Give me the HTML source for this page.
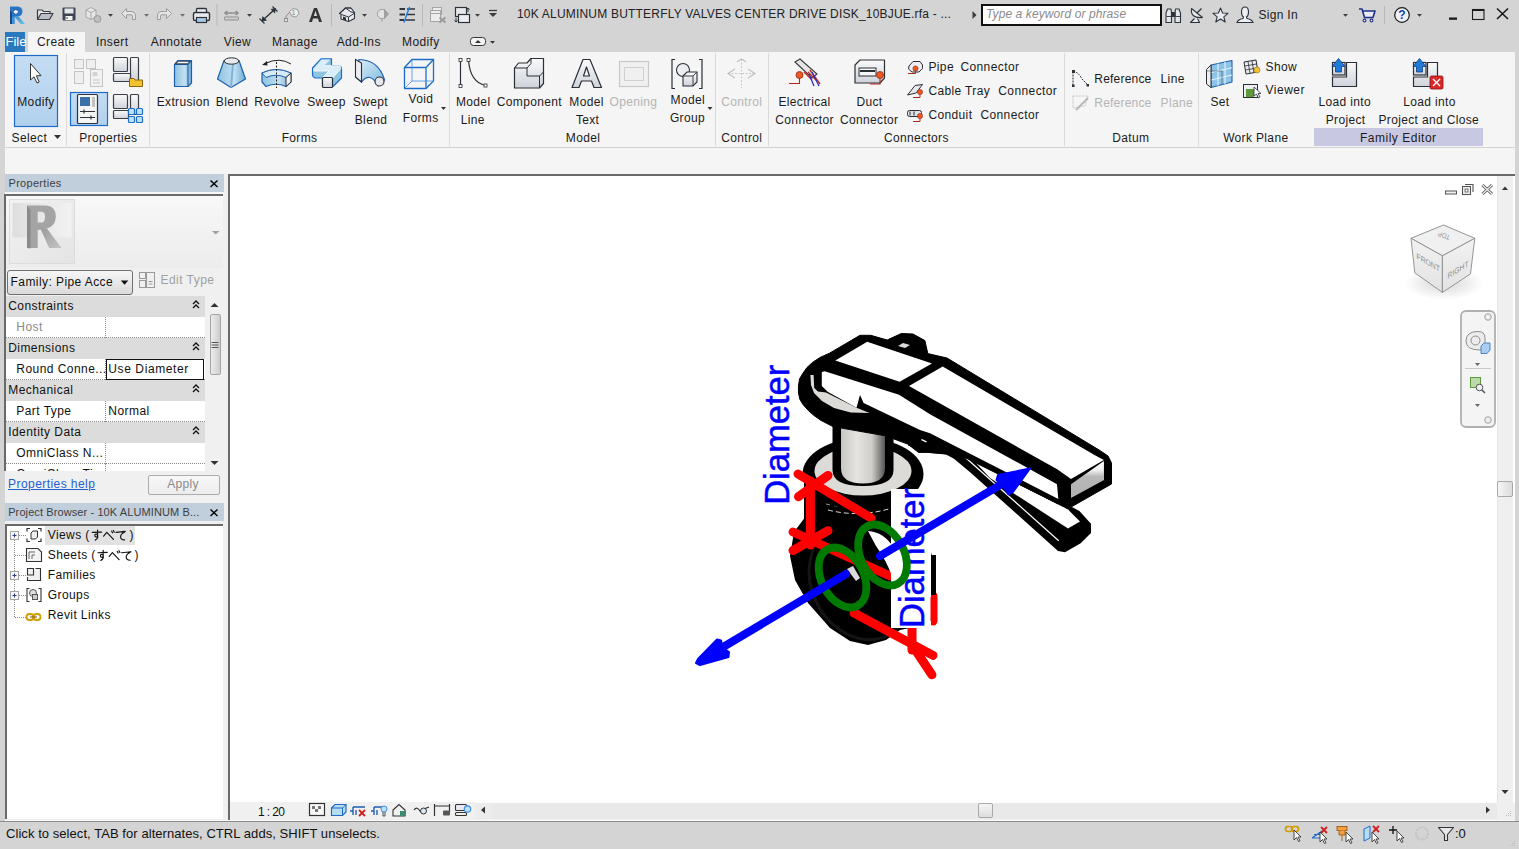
<!DOCTYPE html>
<html><head><meta charset="utf-8">
<style>
*{margin:0;padding:0;box-sizing:border-box}
html,body{width:1519px;height:849px;overflow:hidden;background:#d4d4d4;font-family:"Liberation Sans",sans-serif;color:#000;position:relative}
.a{position:absolute}
.t{position:absolute;white-space:nowrap;color:#1b1b1b}
svg.o{position:absolute;left:0;top:0;overflow:visible}
</style></head><body>

<div class="a" style="left:0px;top:0px;width:1519px;height:31px;background:#d4d4d4"></div>
<svg class="o" width="1519" height="31" viewBox="0 0 1519 31">
<defs>
<linearGradient id="rlogo" x1="0" y1="0" x2="1" y2="1"><stop offset="0" stop-color="#3a7fc8"/><stop offset="1" stop-color="#1e4f8c"/></linearGradient>
</defs>
<!-- R logo -->
<defs><linearGradient id="rleg" x1="0" y1="0" x2="1" y2="1"><stop offset="0" stop-color="#3a8ccf"/><stop offset="1" stop-color="#6cc4ee"/></linearGradient></defs>
<path d="M10 6.5 L17.5 6.5 Q22.5 6.8 22.5 11.5 Q22.3 15.8 18 16.6 L14.5 16.8 L14.5 24 L10 24 Z" fill="#2a74c6"/>
<path d="M10 11 L12 12 L12 24 L10 24 Z" fill="#1c4785"/>
<path d="M12 17 L14.5 16.5 L14.5 24 L12 24 Z" fill="#3f93d4"/>
<path d="M14.5 16.5 L18.5 16.2 L25 24 L20.5 24 Z" fill="url(#rleg)"/>
<circle cx="15.8" cy="11.6" r="2.1" fill="#f2f2f2"/>
<path d="M13.7 10.5 Q15.5 8.6 17.8 10.2" fill="none" stroke="#1c3a70" stroke-width="0.9"/>
<!-- open folder -->
<path d="M37.5 19.5 L37.5 10 L42 10 L43.5 11.5 L50 11.5 L50 13.5" fill="#e8e8ea" stroke="#3a3d44" stroke-width="1.2"/>
<path d="M37.5 19.5 L41 13.5 L53 13.5 L49.5 19.5 Z" fill="#b9bec8" stroke="#3a3d44" stroke-width="1.2" stroke-linejoin="round"/>
<!-- save -->
<rect x="62.5" y="7.5" width="13" height="13" rx="1" fill="#3d4350"/>
<rect x="64.5" y="8.5" width="9" height="5" fill="#e4e6ea"/>
<rect x="65.5" y="16" width="7" height="4" fill="#f4f4f4"/>
<rect x="66.5" y="17" width="1" height="2" fill="#3d4350"/>
<!-- sync (gray) -->
<g fill="#e6e6e6" stroke="#a8a8a8" stroke-width="1"><path d="M86 10 L91 7.5 L96 10 L96 17 L91 19.5 L86 17 Z"/><path d="M86 10 L91 12.5 L96 10 M91 12.5 L91 19.5" fill="none"/></g>
<circle cx="97.5" cy="19" r="3.5" fill="#bdbdbd" stroke="#9a9a9a"/>
<path d="M108 14 L113 14 L110.5 16.8 Z" fill="#3c3c3c"/>
<!-- undo -->
<path d="M121.5 13.5 L126.5 8.5 L126.5 11.5 L131 11.5 Q135.5 11.5 135.5 16 L135.5 19.5 L132.5 19.5 L132.5 16 Q132.5 14.8 131 14.8 L126.5 14.8 L126.5 18.5 Z" fill="#e4e4e4" stroke="#9c9c9c" stroke-width="1"/>
<path d="M144 14 L149 14 L146.5 16.8 Z" fill="#6c6c6c"/>
<!-- redo -->
<path d="M171.5 13.5 L166.5 8.5 L166.5 11.5 L162 11.5 Q157.5 11.5 157.5 16 L157.5 19.5 L160.5 19.5 L160.5 16 Q160.5 14.8 162 14.8 L166.5 14.8 L166.5 18.5 Z" fill="#e4e4e4" stroke="#9c9c9c" stroke-width="1"/>
<path d="M180 14 L185 14 L182.5 16.8 Z" fill="#6c6c6c"/>
<!-- print -->
<rect x="196.5" y="8.5" width="10" height="5" rx="1" fill="#f2f2f2" stroke="#2d333d" stroke-width="1.3"/>
<rect x="193.5" y="12.5" width="16" height="8" rx="1.5" fill="#e9eaee" stroke="#2d333d" stroke-width="1.4"/>
<rect x="196.5" y="17.5" width="10" height="5" fill="#a9c8e4" stroke="#2d333d" stroke-width="1.2"/>
<rect x="216.5" y="4" width="1" height="22" fill="#b8b8b8"/>
<!-- aligned dim -->
<path d="M224.5 13 L238.5 13 M224.5 13 L227.5 11 M224.5 13 L227.5 15 M238.5 13 L235.5 11 M238.5 13 L235.5 15" stroke="#8e8e8e" stroke-width="1.3" fill="none"/>
<rect x="224.5" y="17" width="14" height="3" rx="0.5" fill="#d0d0d0" stroke="#8e8e8e"/>
<path d="M247 14 L252 14 L249.5 16.8 Z" fill="#3c3c3c"/>
<!-- measure -->
<path d="M263.5 19.5 L274 10" stroke="#2d333d" stroke-width="1.5"/>
<path d="M261.5 21.5 L262.5 16 L267 20.5 Z M276 8 L275 13.5 L270.5 9 Z" fill="#2d333d"/>
<path d="M259.5 18.5 L264.5 23.5 M272.5 6.5 L277.5 11.5" stroke="#2d333d" stroke-width="1.2"/>
<!-- tag -->
<path d="M286 20 L286 16 L290 12" stroke="#8e8e8e" stroke-width="1" fill="none"/>
<rect x="284.5" y="18.5" width="3" height="3" fill="#e8e8e8" stroke="#8e8e8e"/>
<path d="M289.5 11.5 L293 8.5 L297.5 9.5 L299 13.5 L296 17 L291.5 16 Z" fill="#ececec" stroke="#9a9a9a"/>
<text x="291.6" y="15.2" font-size="7" fill="#8a8a8a" font-family="Liberation Sans">1</text>
<!-- A -->
<path d="M309 22 L314 8 L317 8 L322 22 L319 22 L318 18.5 L313 18.5 L312 22 Z M313.8 16 L317.2 16 L315.5 10.8 Z" fill="#333" fill-rule="evenodd"/>
<rect x="331" y="4" width="1" height="22" fill="#b8b8b8"/>
<!-- house -->
<path d="M339.5 13.5 L345.5 8 L351 8 L354.5 12.5 L354.5 18.5 L348.5 21.5 L341 19 L341 14 Z" fill="#e8e9ee" stroke="#2d333d" stroke-width="1.1" stroke-linejoin="round"/>
<path d="M339.5 13.5 L345.5 8 L351 12 L354.5 12.5 M345.5 8 L351 8 M341.5 14.5 L348.5 17 L354 13.5 M348.5 17 L348.5 21.5" fill="none" stroke="#2d333d" stroke-width="1"/>
<path d="M343 19.5 L343 16.5 L346 17.5 L346 20.5" fill="#2d333d"/>
<path d="M362 14 L367 14 L364.5 16.8 Z" fill="#3c3c3c"/>
<!-- section / viewpoint -->
<circle cx="382" cy="14" r="4.6" fill="#e2e2e2" stroke="#a0a0a0"/>
<path d="M384 8.5 L389 14 L384 19.5 Z" fill="#a0a0a0"/>
<path d="M382 18.5 L382 22" stroke="#a0a0a0"/>
<!-- thin lines -->
<path d="M399.5 9 L405 9 M399.5 14.5 L405 14.5 M399.5 20 L404 20" stroke="#33363c" stroke-width="2.2"/>
<path d="M407 9 L415 9 M406 14.5 L415 14.5 M405 20 L415 20" stroke="#33363c" stroke-width="1.3"/>
<path d="M409.5 7 L404 22.5" stroke="#1e7ae6" stroke-width="1.4"/>
<rect x="422" y="4" width="1" height="22" fill="#b8b8b8"/>
<!-- close inactive -->
<rect x="432.5" y="7.5" width="9" height="7" fill="#ececec" stroke="#a4a4a4"/>
<rect x="430.5" y="10.5" width="10" height="8" fill="#ececec" stroke="#a4a4a4"/>
<rect x="430.5" y="13.5" width="10" height="8" fill="#ececec" stroke="#a4a4a4"/>
<path d="M439.5 17.5 L445.5 22.5 M445.5 17.5 L439.5 22.5" stroke="#9a9a9a" stroke-width="1.8"/>
<!-- switch windows -->
<rect x="455.5" y="7.5" width="11" height="9" fill="#e8e8ea" stroke="#2d333d" stroke-width="1.2"/>
<rect x="458.5" y="14.5" width="11" height="8" fill="#eeeef0" stroke="#2d333d" stroke-width="1.2"/>
<path d="M468 8 L468 12 M466.5 9.5 L468 8 L469.5 9.5 M456 18 L456 22 M454.5 20.5 L456 22 L457.5 20.5" stroke="#2d333d" stroke-width="1" fill="none"/>
<path d="M475 14 L480 14 L477.5 16.8 Z" fill="#3c3c3c"/>
<path d="M489 10.5 L497 10.5" stroke="#3c3c3c" stroke-width="1.3"/>
<path d="M489 13 L497 13 L493 17 Z" fill="#3c3c3c"/>
<!-- expander triangle near search -->
<path d="M972.5 11 L976.5 15 L972.5 19 Z" fill="#3c3c3c"/>
<!-- binoculars -->
<g fill="#e4e6ea" stroke="#2d333d" stroke-width="1.1" stroke-linejoin="round">
<path d="M1166 22.5 L1166 13 L1167.5 9 L1171 9 L1171.5 13 L1171.5 22.5 Z"/>
<path d="M1175 22.5 L1175 13 L1175.5 9 L1179 9 L1180.5 13 L1180.5 22.5 Z"/>
<rect x="1171.5" y="12.5" width="3.5" height="4" fill="#2d333d"/>
</g>
<path d="M1166.5 16.5 L1171 16.5 M1175.5 16.5 L1180 16.5" stroke="#2d333d" stroke-width="0.9"/>
<!-- satellite -->
<path d="M1194.5 18.5 L1190.5 22.5 L1199.5 22.5 L1197.5 18.5" fill="#e6e8ec" stroke="#2d333d" stroke-width="1.1" stroke-linejoin="round"/>
<path d="M1191.5 8.5 Q1190 18.5 1202.5 17.5 Z" fill="#e6e8ec" stroke="#2d333d" stroke-width="1.1" stroke-linejoin="round"/>
<path d="M1197 13 L1201.5 8.5" stroke="#2d333d" stroke-width="1.3"/>
<!-- star -->
<path d="M1220.5 8 L1222.6 13 L1228 13.3 L1223.8 16.8 L1225.2 22 L1220.5 19 L1215.8 22 L1217.2 16.8 L1213 13.3 L1218.4 13 Z" fill="#e8eaee" stroke="#2d333d" stroke-width="1.1" stroke-linejoin="round"/>
<!-- user -->
<path d="M1241.5 12 Q1241.5 7 1245 7 Q1248.5 7 1248.5 12 Q1248.5 16 1246.5 17 L1247 18.5 Q1252 19.5 1253 22.5 L1237 22.5 Q1238 19.5 1243 18.5 L1243.5 17 Q1241.5 16 1241.5 12 Z" fill="#eceef2" stroke="#2d333d" stroke-width="1.1"/>
<path d="M1343 14 L1348 14 L1345.5 16.8 Z" fill="#3c3c3c"/>
<!-- cart -->
<path d="M1359 9 L1362 9 L1364.5 17.5 L1373 17.5 L1375 11 L1363 11" fill="#e8eaf4" stroke="#1f2f8c" stroke-width="1.6" stroke-linejoin="round"/>
<circle cx="1364.5" cy="20.5" r="1.4" fill="#fff" stroke="#1f2f8c" stroke-width="1.1"/>
<circle cx="1371.5" cy="20.5" r="1.4" fill="#fff" stroke="#1f2f8c" stroke-width="1.1"/>
<rect x="1384" y="6" width="1" height="18" fill="#b8b8b8"/>
<!-- help -->
<circle cx="1402" cy="15" r="7.3" fill="#eef0f6" stroke="#1b1b1b" stroke-width="1.2"/>
<text x="1398.2" y="19.3" font-size="12" font-weight="bold" fill="#1446b4" font-family="Liberation Sans">?</text>
<path d="M1417 14 L1422 14 L1419.5 16.8 Z" fill="#3c3c3c"/>
<!-- window buttons -->
<rect x="1449" y="17.5" width="8" height="2.3" fill="#1b1b1b"/>
<rect x="1472.5" y="9.5" width="11.5" height="10" fill="none" stroke="#1b1b1b" stroke-width="1.1"/>
<rect x="1472.5" y="9" width="11.5" height="2" fill="#1b1b1b"/>
<path d="M1497 8.5 L1508 19 M1508 8.5 L1497 19" stroke="#1b1b1b" stroke-width="1.6"/>
</svg>
<div class="t" style="left:517px;top:7.64px;font-size:12px;line-height:12px;letter-spacing:0.2px;color:#222;">10K ALUMINUM BUTTERFLY VALVES CENTER DRIVE DISK_10BJUE.rfa - ...</div>
<div class="a" style="left:981px;top:4px;width:181px;height:22px;background:#fff;border:2px solid #111"></div>
<div class="t" style="left:986px;top:8.44px;font-size:12px;line-height:12px;letter-spacing:0.1px;color:#8a8a8a;font-style:italic">Type a keyword or phrase</div>
<div class="t" style="left:1258.5px;top:8.54px;font-size:12px;line-height:12px;letter-spacing:0.3px;color:#222;">Sign In</div>
<div class="a" style="left:5px;top:32px;width:20px;height:20px;background:#2a79be"></div>
<div class="t" style="left:5.5px;top:35.00px;font-size:13px;line-height:13px;letter-spacing:0px;color:#fff;">File</div>
<div class="a" style="left:28px;top:32px;width:57px;height:21px;background:#f5f5f5"></div>
<div class="t" style="left:37px;top:35.84px;font-size:12px;line-height:12px;letter-spacing:0.4px;color:#1b1b1b;">Create</div>
<div class="t" style="left:96px;top:35.84px;font-size:12px;line-height:12px;letter-spacing:0.4px;color:#1b1b1b;">Insert</div>
<div class="t" style="left:150.8px;top:35.84px;font-size:12px;line-height:12px;letter-spacing:0.4px;color:#1b1b1b;">Annotate</div>
<div class="t" style="left:223.8px;top:35.84px;font-size:12px;line-height:12px;letter-spacing:0.4px;color:#1b1b1b;">View</div>
<div class="t" style="left:272px;top:35.84px;font-size:12px;line-height:12px;letter-spacing:0.4px;color:#1b1b1b;">Manage</div>
<div class="t" style="left:336.7px;top:35.84px;font-size:12px;line-height:12px;letter-spacing:0.4px;color:#1b1b1b;">Add-Ins</div>
<div class="t" style="left:402px;top:35.84px;font-size:12px;line-height:12px;letter-spacing:0.4px;color:#1b1b1b;">Modify</div>
<svg class="o" width="1519" height="60"><rect x="470.5" y="37.5" width="15" height="8" rx="3" fill="#f4f4f4" stroke="#333" stroke-width="1"/><path d="M475 43 L478 40 L481 43 Z" fill="#333"/><path d="M490 41 L495 41 L492.5 43.8 Z" fill="#333"/></svg>
<div class="a" style="left:5px;top:52px;width:1510px;height:95px;background:#f5f5f5"></div>
<div class="a" style="left:5px;top:147px;width:1510px;height:1px;background:#d2d2d2"></div>
<div class="a" style="left:5px;top:148px;width:1510px;height:26px;background:#f5f5f5"></div>
<div class="a" style="left:1515px;top:52px;width:4px;height:770px;background:#d4d4d4"></div>
<div class="a" style="left:66px;top:53px;width:1px;height:93px;background:#dadada"></div>
<div class="a" style="left:149px;top:53px;width:1px;height:93px;background:#dadada"></div>
<div class="a" style="left:449px;top:53px;width:1px;height:93px;background:#dadada"></div>
<div class="a" style="left:715px;top:53px;width:1px;height:93px;background:#dadada"></div>
<div class="a" style="left:768px;top:53px;width:1px;height:93px;background:#dadada"></div>
<div class="a" style="left:1064px;top:53px;width:1px;height:93px;background:#dadada"></div>
<div class="a" style="left:1198px;top:53px;width:1px;height:93px;background:#dadada"></div>
<div class="a" style="left:1314px;top:128px;width:169px;height:18px;background:#c8c8e2"></div>
<svg class="o" width="1519" height="160">
<defs>
<linearGradient id="gsel" x1="0" y1="0" x2="0" y2="1"><stop offset="0" stop-color="#c5ddf3"/><stop offset="1" stop-color="#b1d1ee"/></linearGradient>
<linearGradient id="gblue" x1="0" y1="0" x2="1" y2="0"><stop offset="0" stop-color="#8ec2e2"/><stop offset="0.6" stop-color="#c3e0f1"/><stop offset="1" stop-color="#6aaad6"/></linearGradient>
<linearGradient id="gblue2" x1="0" y1="0" x2="1" y2="1"><stop offset="0" stop-color="#e0f0fa"/><stop offset="1" stop-color="#7ab7dd"/></linearGradient>
<linearGradient id="gpanel" x1="0" y1="0" x2="0" y2="1"><stop offset="0" stop-color="#fafafa"/><stop offset="1" stop-color="#cfd3da"/></linearGradient>
</defs>
<!-- Modify -->
<rect x="14.5" y="55.5" width="43" height="71" fill="url(#gsel)" stroke="#1e6cc9" stroke-width="1.2"/>
<path d="M30.5 63.5 L30.5 80 L34 76.8 L37 83 L39.2 82 L36.4 75.8 L41 75.6 Z" fill="#fff" stroke="#333" stroke-width="1" stroke-linejoin="round"/>
<path d="M54 135 L61 135 L57.5 139 Z" fill="#333"/>
<!-- Properties: type properties (gray) -->
<g fill="#efefef" stroke="#c4c4c4" stroke-width="1">
<rect x="74.5" y="59.5" width="9" height="9"/><rect x="86.5" y="59.5" width="9" height="9"/>
<rect x="74.5" y="71.5" width="9" height="12"/>
<rect x="90.5" y="69.5" width="12" height="17" fill="#f2f2f2"/>
</g>
<rect x="92.5" y="72" width="5" height="4" fill="#d4d4d4"/>
<path d="M93 80 L100 80 M93 83 L100 83" stroke="#c8c8c8"/>
<!-- family types -->
<g fill="url(#gpanel)" stroke="#3a3e46" stroke-width="1.2">
<rect x="113.5" y="57.5" width="14" height="14" rx="1"/>
<rect x="130.5" y="57.5" width="8" height="23" rx="1"/>
<rect x="113.5" y="73.5" width="17" height="8" rx="1"/>
</g>
<path d="M129.5 78.5 L134 78.5 L135 80 L142.5 80 L142.5 86.5 L129.5 86.5 Z" fill="#f2c230" stroke="#8a6a10" stroke-width="1"/>
<!-- family category selected -->
<rect x="70.5" y="92.5" width="37" height="33" fill="url(#gsel)" stroke="#1e6cc9" stroke-width="1.2"/>
<rect x="77.5" y="94.5" width="20" height="29" rx="1" fill="#f4f4f4" stroke="#2d333d" stroke-width="1.2"/>
<rect x="80" y="97" width="10" height="9" fill="#3b6fa8"/>
<rect x="92" y="97" width="3" height="10" fill="#c2c2c2"/>
<path d="M80 111.5 L95 111.5 M80 117.5 L95 117.5 M84 109.5 L84 113.5 M91 115.5 L91 119.5" stroke="#2d333d" stroke-width="1.2"/>
<!-- family category params -->
<g fill="url(#gpanel)" stroke="#3a3e46" stroke-width="1.2">
<rect x="113.5" y="94.5" width="14" height="14" rx="1"/>
<rect x="130.5" y="94.5" width="8" height="20" rx="1"/>
<rect x="113.5" y="110.5" width="15" height="8" rx="1"/>
</g>
<g fill="#bfe0f4" stroke="#1f6fc6" stroke-width="1.2"><rect x="128.5" y="108.5" width="6" height="6" rx="1"/><rect x="136.5" y="108.5" width="6" height="6" rx="1"/><rect x="128.5" y="116.5" width="6" height="6" rx="1"/><rect x="136.5" y="116.5" width="6" height="6" rx="1"/></g>
<!-- Extrusion -->
<path d="M174.5 64.5 L178 60.5 L191.5 60.5 L191.5 83 L188 86.5 L174.5 86.5 Z" fill="url(#gblue)" stroke="#1f5fae" stroke-width="1.2" stroke-linejoin="round"/>
<path d="M174.5 64.5 L188 64.5 L191.5 60.5 M188 64.5 L188 86.5" fill="none" stroke="#1f5fae" stroke-width="1.1"/>
<path d="M175.5 63.8 L178.5 61.2 L190 61.2 L187.5 63.8 Z" fill="#eef3f8" stroke="#2b2f36" stroke-width="0.9"/>
<!-- Blend -->
<path d="M224 60.5 L217.5 79 L231 87.5 L245.5 79 L239 60.5 Z" fill="url(#gblue)" stroke="#1f5fae" stroke-width="1.2" stroke-linejoin="round"/>
<path d="M231 87.5 L233 63.5" stroke="#7fb4da" stroke-width="2"/>
<ellipse cx="231.5" cy="61" rx="7.3" ry="3.2" fill="#e8eaee" stroke="#2b2f36" stroke-width="1"/>
<!-- Revolve -->
<path d="M262 73 Q276 66 291 73 L291 82 L286 86.5 Q276 82 266 86.5 L262 82 Z" fill="url(#gblue)" stroke="#1f5fae" stroke-width="1.2"/>
<path d="M262 73 Q276 66 291 73 L286 77.5 Q276 73 266 77.5 Z" fill="#d8ecf8" stroke="#1f5fae" stroke-width="1"/>
<path d="M286 77.5 L291 73 L291 82 L286 86.5 Z" fill="#f2f2f2" stroke="#2b2f36" stroke-width="1"/>
<path d="M276.5 62 L276.5 88" stroke="#222" stroke-width="1" stroke-dasharray="2,1.5"/>
<path d="M291 64 Q280 57 266 63" fill="none" stroke="#222" stroke-width="1"/>
<path d="M262 65 L267 61 L267.5 65.5 Z" fill="#222"/>
<!-- Sweep -->
<path d="M312.5 68 L321 58.8 L331.5 58.8 L331.5 65.5 L339 65.5 Q341.5 66.5 341.5 69 L341.5 78 L333 86.5 L322.5 86.5 L322.5 78 L315 78 Q312.5 77 312.5 75 Z" fill="#8cc4e2" stroke="#1f6cc9" stroke-width="1.2" stroke-linejoin="round"/>
<path d="M313 69 L321.5 59.5 L330.5 59.5 L324 65.8 L340.5 65.8 L341 68 L333 77.5 L322.5 77.5 L329 71 L313.5 71 Z" fill="#d9eef8"/>
<path d="M313.5 71 L329 71 M324 65.8 L340.5 65.8 M333 77.5 L341 68.5 M322.5 77.5 L329 71" stroke="#fff" stroke-width="0.9" fill="none"/>
<rect x="322.5" y="77.5" width="10" height="10" rx="1" fill="url(#gpanel)" stroke="#2b2f36" stroke-width="1.2"/>
<!-- Swept blend -->
<path d="M359 59.5 Q379 60 384.5 80 L378 86 Q370 71 361.5 82 L355.5 77 Z" fill="url(#gblue2)" stroke="#1f5fae" stroke-width="1.2"/>
<path d="M355.5 59.5 L361.5 63 L361.5 82 L355.5 77 Z" fill="#eceef2" stroke="#2b2f36" stroke-width="1.1"/>
<circle cx="379.5" cy="81.5" r="4.5" fill="#e6e8ec" stroke="#2b2f36" stroke-width="1.1"/>
<!-- Void forms -->
<g fill="none" stroke="#1e6cc9" stroke-width="1.3"><path d="M404.5 67.5 L412 59.5 L433.5 59.5 L433.5 81 L426 88.5 L404.5 88.5 Z"/><path d="M404.5 67.5 L426 67.5 L433.5 59.5 M426 67.5 L426 88.5"/></g>
<g fill="none" stroke="#3c8ee8" stroke-width="0.8"><path d="M412 59.5 L412 81 L433.5 81 M412 81 L404.5 88.5"/></g>
<path d="M441 107 L446 107 L443.5 110 Z" fill="#333"/>
<!-- Model line -->
<path d="M460.5 60 L460.5 86 M468.5 60 Q470 82 485.5 85.5" fill="none" stroke="#2b2f36" stroke-width="1.2"/>
<rect x="459" y="58.5" width="3" height="3" fill="#fff" stroke="#2b2f36" stroke-width="0.8"/>
<rect x="459" y="84.5" width="3" height="3" fill="#fff" stroke="#2b2f36" stroke-width="0.8"/>
<rect x="467" y="58.5" width="3" height="3" fill="#fff" stroke="#2b2f36" stroke-width="0.8"/>
<rect x="484" y="84" width="3" height="3" fill="#fff" stroke="#2b2f36" stroke-width="0.8"/>
<!-- Component -->
<path d="M514.5 68 L518.5 63 L527 63 L531 58.5 L543.5 58.5 L543.5 83.5 L539.5 88 L514.5 88 Z" fill="url(#gpanel)" stroke="#2b2f36" stroke-width="1.2" stroke-linejoin="round"/>
<path d="M514.5 68 L527 68 L531 63.5 L531 58.5 M527 68 L527 76 L539.5 76 L539.5 88 M539.5 76 L543.5 72" fill="none" stroke="#2b2f36" stroke-width="1"/>
<!-- Model text A -->
<path d="M572 87.5 L583 59.5 L590 59.5 L601.5 87.5 L594 87.5 L591.5 81 L581.5 81 L579 87.5 Z M583.5 76 L589.5 76 L586.5 67 Z" fill="url(#gpanel)" stroke="#2b2f36" stroke-width="1.2" fill-rule="evenodd" stroke-linejoin="round"/>
<!-- Opening (gray) -->
<rect x="619.5" y="61.5" width="29" height="25" fill="#f0f0f0" stroke="#c8c8c8" stroke-width="1.2"/>
<rect x="624.5" y="67.5" width="19" height="13" fill="none" stroke="#d0d0d0" stroke-width="1"/>
<!-- Model group -->
<path d="M675 59.5 L672 59.5 L672 88.5 L675 88.5 M699 59.5 L702 59.5 L702 88.5 L699 88.5" fill="none" stroke="#2b2f36" stroke-width="1.2"/>
<circle cx="683" cy="70" r="6.5" fill="#eceef2" stroke="#2b2f36" stroke-width="1.1"/>
<path d="M683 76 L687 72 L697 72 L697 82 L693 86 L683 86 Z" fill="url(#gpanel)" stroke="#2b2f36" stroke-width="1.1"/>
<path d="M683 76 L693 76 L697 72 M693 76 L693 86" fill="none" stroke="#2b2f36" stroke-width="0.9"/>
<path d="M707.5 107 L712.5 107 L710 110 Z" fill="#333"/>
<!-- Control (gray) -->
<path d="M741.5 59 L741.5 88 M728 73.5 L755 73.5" stroke="#c8c8c8" stroke-width="1" stroke-dasharray="2,1.5"/>
<path d="M735 69 L728 73.5 L735 78 M748 69 L755 73.5 L748 78 M737 62 L741.5 59 L746 62" fill="none" stroke="#c0c0c0" stroke-width="1.2"/>
<!-- Electrical connector -->
<path d="M795 62 L800 59 L817 74 L812 78 Z" fill="#e6e6e6" stroke="#3a3a3a" stroke-width="1.1"/>
<path d="M804 72 L812 80 M808 72 L817 81 M810 70 L820 84" stroke="#c8281e" stroke-width="1.3"/>
<path d="M809 74 L814 86 M812 72 L819 86" stroke="#2930c8" stroke-width="1.3"/>
<circle cx="799.5" cy="75" r="3.5" fill="#e95a24" stroke="#9a2b10" stroke-width="0.8"/>
<path d="M799.5 78 L799.5 83.5 L789 83.5" fill="none" stroke="#b02818" stroke-width="1.1"/>
<!-- Duct connector -->
<path d="M855 65 L860 60 L884.5 60 L884.5 78 L880 83 L855 83 Z" fill="url(#gpanel)" stroke="#2b2f36" stroke-width="1.2" stroke-linejoin="round"/>
<rect x="859" y="68" width="17" height="8" fill="#f6f6f6" stroke="#2b2f36" stroke-width="1"/>
<rect x="860" y="70" width="15" height="2" fill="#2b2f36"/>
<circle cx="880" cy="75" r="3.5" fill="#e95a24" stroke="#9a2b10" stroke-width="0.8"/>
<path d="M880 78 L880 84 L870 84" fill="none" stroke="#b02818" stroke-width="1.1"/>
<!-- small connectors -->
<g>
<path d="M909 66 L913 61.5 L920 61.5 L922.5 65 L922.5 68.5 L919 72 L912 72 L908.5 69 Z" fill="#eceef2" stroke="#2b2f36" stroke-width="1"/>
<circle cx="915.5" cy="68.5" r="2.6" fill="#e95a24" stroke="#9a2b10" stroke-width="0.6"/>
<path d="M915.5 71 L915.5 73.5 L908 73.5" fill="none" stroke="#b02818"/>
<path d="M907.5 95 L915 85.5 L922.5 84.5 L916 93 Z" fill="#e6e8ec" stroke="#2b2f36" stroke-width="1"/>
<circle cx="920" cy="92" r="2.6" fill="#e95a24" stroke="#9a2b10" stroke-width="0.6"/>
<path d="M920 94.5 L920 97.5 L913 97.5" fill="none" stroke="#b02818"/>
<rect x="907.5" y="110.5" width="14" height="6" rx="2" fill="#dfe2e6" stroke="#2b2f36" stroke-width="1"/>
<path d="M910 111.5 L910 115.5 M914 111.5 L914 115.5" stroke="#2b2f36"/>
<circle cx="920" cy="116" r="2.6" fill="#e95a24" stroke="#9a2b10" stroke-width="0.6"/>
<path d="M920 118.5 L920 121.5 L913 121.5" fill="none" stroke="#b02818"/>
</g>
<!-- Reference line -->
<path d="M1073 71.5 L1073 86 M1073 71.5 Q1078 71.5 1082 79 L1088 85" fill="none" stroke="#2b2f36" stroke-width="1" stroke-dasharray="2,1"/>
<rect x="1072" y="70" width="3" height="3" fill="#2b2f36"/><rect x="1072" y="84.5" width="2.5" height="2.5" fill="#2b2f36"/><rect x="1086.5" y="84" width="2.5" height="2.5" fill="#2b2f36"/>
<!-- Reference plane (gray) -->
<path d="M1073 96 L1088 96 L1085 106 L1073 108 Z" fill="none" stroke="#c6c6c6" stroke-width="1" stroke-dasharray="2,1"/>
<path d="M1076 110 L1088 98" stroke="#b8b8b8" stroke-width="2"/>
<!-- Set -->
<path d="M1211 65 L1232 60.5 L1232 82 L1211 87.5 Z" fill="#8cc4e8" stroke="#1f5fae" stroke-width="1.1" stroke-linejoin="round"/>
<path d="M1218 63.5 L1218 85.8 M1225 62 L1225 84 M1211 72.5 L1232 67.8 M1211 80 L1232 75" stroke="#e4f2fb" stroke-width="1.1"/>
<path d="M1206.5 69.5 L1211 65 L1211 87.5 L1206.5 84 Z" fill="#eceef2" stroke="#2b2f36" stroke-width="1"/>
<path d="M1207 71 L1222 71 L1222 84" fill="none" stroke="#2b2f36" stroke-width="0.8" opacity="0.6"/>
<!-- Show -->
<path d="M1244 62 L1256 60 L1258 72 L1246 74 Z" fill="#eceef2" stroke="#2b2f36" stroke-width="1"/>
<path d="M1248 61.5 L1250 73.5 M1252 61 L1254 73 M1244.7 66 L1256.7 64 M1245.3 70 L1257.3 68" stroke="#2b2f36" stroke-width="0.8"/>
<circle cx="1257" cy="70" r="3" fill="#f2c230" stroke="#9a7810" stroke-width="0.6"/>
<!-- Viewer -->
<rect x="1243.5" y="84.5" width="14" height="13" fill="#eceef2" stroke="#2b2f36" stroke-width="1"/>
<rect x="1246" y="89" width="8" height="8" fill="#5c9a3c"/>
<path d="M1254 87 L1254 96 L1256.5 94 L1258.5 98 L1260 97 L1258 93.5 L1261 93.5 Z" fill="#fff" stroke="#2b2f36" stroke-width="0.8"/>
<!-- Load into project -->
<g fill="url(#gpanel)" stroke="#2b2f36" stroke-width="1.2">
<path d="M1346.5 62.5 L1356.5 62.5 L1356.5 86.5 L1332.5 86.5 L1332.5 77 L1346.5 77 Z"/>
<rect x="1332.5" y="62.5" width="12.5" height="12.5"/>
</g>
<path d="M1332 66.5 L1338.5 58.5 L1345 66.5 L1341.5 66.5 L1341.5 72 L1335.5 72 L1335.5 66.5 Z" fill="#1f7ad8" stroke="#0d3e80" stroke-width="0.8" stroke-linejoin="round"/>
<!-- load into project and close -->
<g fill="url(#gpanel)" stroke="#2b2f36" stroke-width="1.2">
<path d="M1427.5 62.5 L1437.5 62.5 L1437.5 86.5 L1413.5 86.5 L1413.5 77 L1427.5 77 Z"/>
<rect x="1413.5" y="62.5" width="12.5" height="12.5"/>
</g>
<path d="M1413 66.5 L1419.5 58.5 L1426 66.5 L1422.5 66.5 L1422.5 72 L1416.5 72 L1416.5 66.5 Z" fill="#1f7ad8" stroke="#0d3e80" stroke-width="0.8" stroke-linejoin="round"/>
<rect x="1430" y="76" width="13" height="13" rx="1.5" fill="#d8282a" stroke="#8a1010" stroke-width="0.8"/>
<path d="M1433 79 L1440 86 M1440 79 L1433 86" stroke="#fff" stroke-width="1.4"/>
</svg>
<div class="t" style="left:-44.0px;width:160px;text-align:center;top:96.24px;font-size:12px;line-height:12px;letter-spacing:0.35px;color:#1b1b1b;">Modify</div>
<div class="t" style="left:11.5px;top:132.14px;font-size:12px;line-height:12px;letter-spacing:0.4px;color:#1b1b1b;">Select</div>
<div class="t" style="left:28.299999999999997px;width:160px;text-align:center;top:132.14px;font-size:12px;line-height:12px;letter-spacing:0.35px;color:#1b1b1b;">Properties</div>
<div class="t" style="left:103.30000000000001px;width:160px;text-align:center;top:96.34px;font-size:12px;line-height:12px;letter-spacing:0.35px;color:#1b1b1b;">Extrusion</div>
<div class="t" style="left:152.1px;width:160px;text-align:center;top:96.34px;font-size:12px;line-height:12px;letter-spacing:0.35px;color:#1b1b1b;">Blend</div>
<div class="t" style="left:197.2px;width:160px;text-align:center;top:96.34px;font-size:12px;line-height:12px;letter-spacing:0.35px;color:#1b1b1b;">Revolve</div>
<div class="t" style="left:246.5px;width:160px;text-align:center;top:96.34px;font-size:12px;line-height:12px;letter-spacing:0.35px;color:#1b1b1b;">Sweep</div>
<div class="t" style="left:290.4px;width:160px;text-align:center;top:96.34px;font-size:12px;line-height:12px;letter-spacing:0.35px;color:#1b1b1b;">Swept</div>
<div class="t" style="left:291.0px;width:160px;text-align:center;top:114.34px;font-size:12px;line-height:12px;letter-spacing:0.35px;color:#1b1b1b;">Blend</div>
<div class="t" style="left:341.0px;width:160px;text-align:center;top:93.24px;font-size:12px;line-height:12px;letter-spacing:0.35px;color:#1b1b1b;">Void</div>
<div class="t" style="left:340.7px;width:160px;text-align:center;top:111.54px;font-size:12px;line-height:12px;letter-spacing:0.35px;color:#1b1b1b;">Forms</div>
<div class="t" style="left:219.5px;width:160px;text-align:center;top:132.14px;font-size:12px;line-height:12px;letter-spacing:0.35px;color:#1b1b1b;">Forms</div>
<div class="t" style="left:393.2px;width:160px;text-align:center;top:95.84px;font-size:12px;line-height:12px;letter-spacing:0.35px;color:#1b1b1b;">Model</div>
<div class="t" style="left:392.7px;width:160px;text-align:center;top:113.64px;font-size:12px;line-height:12px;letter-spacing:0.35px;color:#1b1b1b;">Line</div>
<div class="t" style="left:449.4px;width:160px;text-align:center;top:95.84px;font-size:12px;line-height:12px;letter-spacing:0.35px;color:#1b1b1b;">Component</div>
<div class="t" style="left:506.5px;width:160px;text-align:center;top:95.84px;font-size:12px;line-height:12px;letter-spacing:0.35px;color:#1b1b1b;">Model</div>
<div class="t" style="left:507.6px;width:160px;text-align:center;top:113.64px;font-size:12px;line-height:12px;letter-spacing:0.35px;color:#1b1b1b;">Text</div>
<div class="t" style="left:553.4px;width:160px;text-align:center;top:95.84px;font-size:12px;line-height:12px;letter-spacing:0.35px;color:#b4b4b4;">Opening</div>
<div class="t" style="left:607.8px;width:160px;text-align:center;top:93.84px;font-size:12px;line-height:12px;letter-spacing:0.35px;color:#1b1b1b;">Model</div>
<div class="t" style="left:607.5px;width:160px;text-align:center;top:111.84px;font-size:12px;line-height:12px;letter-spacing:0.35px;color:#1b1b1b;">Group</div>
<div class="t" style="left:661.8px;width:160px;text-align:center;top:95.84px;font-size:12px;line-height:12px;letter-spacing:0.35px;color:#b4b4b4;">Control</div>
<div class="t" style="left:503.0px;width:160px;text-align:center;top:132.14px;font-size:12px;line-height:12px;letter-spacing:0.35px;color:#1b1b1b;">Model</div>
<div class="t" style="left:661.8px;width:160px;text-align:center;top:132.14px;font-size:12px;line-height:12px;letter-spacing:0.35px;color:#1b1b1b;">Control</div>
<div class="t" style="left:724.5px;width:160px;text-align:center;top:95.84px;font-size:12px;line-height:12px;letter-spacing:0.35px;color:#1b1b1b;">Electrical</div>
<div class="t" style="left:724.6px;width:160px;text-align:center;top:113.64px;font-size:12px;line-height:12px;letter-spacing:0.35px;color:#1b1b1b;">Connector</div>
<div class="t" style="left:789.5px;width:160px;text-align:center;top:95.84px;font-size:12px;line-height:12px;letter-spacing:0.35px;color:#1b1b1b;">Duct</div>
<div class="t" style="left:789.2px;width:160px;text-align:center;top:113.64px;font-size:12px;line-height:12px;letter-spacing:0.35px;color:#1b1b1b;">Connector</div>
<div class="t" style="left:836.4px;width:160px;text-align:center;top:132.14px;font-size:12px;line-height:12px;letter-spacing:0.35px;color:#1b1b1b;">Connectors</div>
<div class="t" style="left:928.5px;top:60.54px;font-size:12px;line-height:12px;letter-spacing:0.35px;color:#1b1b1b;">Pipe</div>
<div class="t" style="left:960.4px;top:60.54px;font-size:12px;line-height:12px;letter-spacing:0.4px;color:#1b1b1b;">Connector</div>
<div class="t" style="left:928.5px;top:84.54px;font-size:12px;line-height:12px;letter-spacing:0.35px;color:#1b1b1b;">Cable Tray</div>
<div class="t" style="left:998.3px;top:84.54px;font-size:12px;line-height:12px;letter-spacing:0.4px;color:#1b1b1b;">Connector</div>
<div class="t" style="left:928.5px;top:108.64px;font-size:12px;line-height:12px;letter-spacing:0.35px;color:#1b1b1b;">Conduit</div>
<div class="t" style="left:980.4px;top:108.64px;font-size:12px;line-height:12px;letter-spacing:0.4px;color:#1b1b1b;">Connector</div>
<div class="t" style="left:1094.3px;top:72.64px;font-size:12px;line-height:12px;letter-spacing:0.2px;color:#1b1b1b;">Reference</div>
<div class="t" style="left:1160.6px;top:72.64px;font-size:12px;line-height:12px;letter-spacing:0.35px;color:#1b1b1b;">Line</div>
<div class="t" style="left:1094.3px;top:96.54px;font-size:12px;line-height:12px;letter-spacing:0.2px;color:#b4b4b4;">Reference</div>
<div class="t" style="left:1160.6px;top:96.54px;font-size:12px;line-height:12px;letter-spacing:0.35px;color:#b4b4b4;">Plane</div>
<div class="t" style="left:1050.8px;width:160px;text-align:center;top:132.14px;font-size:12px;line-height:12px;letter-spacing:0.35px;color:#1b1b1b;">Datum</div>
<div class="t" style="left:1140.0px;width:160px;text-align:center;top:95.84px;font-size:12px;line-height:12px;letter-spacing:0.35px;color:#1b1b1b;">Set</div>
<div class="t" style="left:1265.5px;top:60.54px;font-size:12px;line-height:12px;letter-spacing:0.4px;color:#1b1b1b;">Show</div>
<div class="t" style="left:1265.5px;top:84.44px;font-size:12px;line-height:12px;letter-spacing:0.5px;color:#1b1b1b;">Viewer</div>
<div class="t" style="left:1175.8px;width:160px;text-align:center;top:132.14px;font-size:12px;line-height:12px;letter-spacing:0.35px;color:#1b1b1b;">Work Plane</div>
<div class="t" style="left:1264.8px;width:160px;text-align:center;top:95.84px;font-size:12px;line-height:12px;letter-spacing:0.35px;color:#1b1b1b;">Load into</div>
<div class="t" style="left:1265.6px;width:160px;text-align:center;top:113.64px;font-size:12px;line-height:12px;letter-spacing:0.35px;color:#1b1b1b;">Project</div>
<div class="t" style="left:1349.4px;width:160px;text-align:center;top:95.84px;font-size:12px;line-height:12px;letter-spacing:0.35px;color:#1b1b1b;">Load into</div>
<div class="t" style="left:1348.8px;width:160px;text-align:center;top:113.64px;font-size:12px;line-height:12px;letter-spacing:0.35px;color:#1b1b1b;">Project and Close</div>
<div class="t" style="left:1318.3px;width:160px;text-align:center;top:132.14px;font-size:12px;line-height:12px;letter-spacing:0.5px;color:#1b1b1b;">Family Editor</div>
<div class="a" style="left:5px;top:174px;width:219px;height:329px;background:#f0f0f0"></div>
<div class="a" style="left:5px;top:174px;width:219px;height:18px;background:#c1cedc"></div>
<div class="t" style="left:8.5px;top:178.39px;font-size:11px;line-height:11px;letter-spacing:0.3px;color:#404040;">Properties</div>
<svg class="o" width="240" height="600"><path d="M210.5 180.5 L217.5 187 M217.5 180.5 L210.5 187" stroke="#000" stroke-width="1.4"/></svg>
<div class="a" style="left:5px;top:192px;width:219px;height:2px;background:#f7f7f7"></div>
<div class="a" style="left:4px;top:194px;width:219px;height:277px;border-top:2px solid #6a6a6a;border-left:2px solid #6a6a6a;background:#f0f0f0"></div>
<div class="a" style="left:6px;top:196px;width:217px;height:72px;background:linear-gradient(#f8f8f8,#ececec)"></div>
<div class="a" style="left:9px;top:199px;width:66px;height:65px;border:1px solid #dcdcdc;background:linear-gradient(135deg,#f2f2f2,#e4e4e4)"></div>
<svg class="o" width="240" height="600">
<defs><linearGradient id="rbg" x1="0" y1="0" x2="1" y2="0"><stop offset="0" stop-color="#dedede"/><stop offset="1" stop-color="#f2f2f2"/></linearGradient>
<linearGradient id="rleg2" x1="0" y1="0" x2="1" y2="1"><stop offset="0" stop-color="#9a9a9a"/><stop offset="1" stop-color="#c4c4c4"/></linearGradient></defs>
<rect x="12.5" y="203" width="59" height="34.5" fill="url(#rbg)"/>
<path d="M27 205.6 L45 205.6 Q56 206 55.8 217 Q55.5 226 47 228.6 L37.7 230 L37.7 248 L27 248 Z M37.7 211.8 L42 211.8 Q45 212 45 217 Q45 222.4 42 222.4 L37.7 222.4 Z" fill="#a4a4a4" fill-rule="evenodd"/>
<path d="M27 206 L30.5 210 L30.5 248.5 L27 248 Z" fill="#8a8a8a"/>
<path d="M40.3 228.6 L47 228.6 L61.5 248 L49.2 248 Z" fill="url(#rleg2)"/>
<path d="M212 231 L219.5 231 L215.7 234.5 Z" fill="#a0a0a0"/>
</svg>
<div class="a" style="left:7px;top:269.5px;width:126px;height:25px;border:1px solid #707070;border-radius:3px;background:linear-gradient(#f6f6f6,#e9e9e9 50%,#dadada)"></div>
<div class="t" style="left:10.6px;top:276.44px;font-size:12px;line-height:12px;letter-spacing:0.42px;color:#111;">Family: Pipe Acce</div>
<svg class="o" width="240" height="600"><path d="M120.8 280.5 L128.3 280.5 L124.5 284.8 Z" fill="#111"/>
<g fill="none" stroke="#9a9a9a" stroke-width="1"><rect x="139.5" y="272.5" width="6" height="6"/><rect x="139.5" y="280.5" width="6" height="7"/><rect x="146.5" y="272.5" width="8" height="15"/></g>
<path d="M148.5 281.5 L152.5 281.5 M148.5 284 L152.5 284" stroke="#9a9a9a"/></svg>
<div class="t" style="left:160.5px;top:274.04px;font-size:12px;line-height:12px;letter-spacing:0.46px;color:#a0a0a0;">Edit Type</div>
<div class="a" style="left:6px;top:296px;width:200px;height:175px;overflow:hidden">
<div class="a" style="left:0;top:0px;width:199px;height:20.5px;background:#dcdcdc"></div>
<div class="t" style="left:2.2px;top:4.34px;font-size:12px;line-height:12px;letter-spacing:0.45px;color:#111">Constraints</div>
<svg class="o" style="left:186px;top:4px" width="8" height="9"><path d="M1 4 L4 1 L7 4 M1 8 L4 5 L7 8" fill="none" stroke="#111" stroke-width="1.3"/></svg>
<div class="a" style="left:0;top:20.5px;width:199px;height:21.0px;background:#fff;border-bottom:1px dotted #8a8a8a"></div>
<div class="a" style="left:99px;top:20.5px;width:1px;height:21.0px;border-left:1px dotted #8a8a8a"></div>
<div class="t" style="left:10.3px;top:24.84px;font-size:12px;line-height:12px;letter-spacing:0.45px;color:#8a8a8a">Host</div>
<div class="a" style="left:0;top:41.5px;width:199px;height:21.0px;background:#dcdcdc"></div>
<div class="t" style="left:2.2px;top:45.84px;font-size:12px;line-height:12px;letter-spacing:0.45px;color:#111">Dimensions</div>
<svg class="o" style="left:186px;top:45.5px" width="8" height="9"><path d="M1 4 L4 1 L7 4 M1 8 L4 5 L7 8" fill="none" stroke="#111" stroke-width="1.3"/></svg>
<div class="a" style="left:0;top:62.5px;width:199px;height:21.0px;background:#fff;border-bottom:1px dotted #8a8a8a"></div>
<div class="a" style="left:99px;top:62.5px;width:1px;height:21.0px;border-left:1px dotted #8a8a8a"></div>
<div class="t" style="left:10.3px;top:66.84px;font-size:12px;line-height:12px;letter-spacing:0.45px;color:#111">Round Conne...</div>
<div class="a" style="left:0;top:83.5px;width:199px;height:21.0px;background:#dcdcdc"></div>
<div class="t" style="left:2.2px;top:87.84px;font-size:12px;line-height:12px;letter-spacing:0.45px;color:#111">Mechanical</div>
<svg class="o" style="left:186px;top:87.5px" width="8" height="9"><path d="M1 4 L4 1 L7 4 M1 8 L4 5 L7 8" fill="none" stroke="#111" stroke-width="1.3"/></svg>
<div class="a" style="left:0;top:104.5px;width:199px;height:21.0px;background:#fff;border-bottom:1px dotted #8a8a8a"></div>
<div class="a" style="left:99px;top:104.5px;width:1px;height:21.0px;border-left:1px dotted #8a8a8a"></div>
<div class="t" style="left:10.3px;top:108.84px;font-size:12px;line-height:12px;letter-spacing:0.45px;color:#111">Part Type</div>
<div class="a" style="left:0;top:125.5px;width:199px;height:21.0px;background:#dcdcdc"></div>
<div class="t" style="left:2.2px;top:129.84px;font-size:12px;line-height:12px;letter-spacing:0.45px;color:#111">Identity Data</div>
<svg class="o" style="left:186px;top:129.5px" width="8" height="9"><path d="M1 4 L4 1 L7 4 M1 8 L4 5 L7 8" fill="none" stroke="#111" stroke-width="1.3"/></svg>
<div class="a" style="left:0;top:146.5px;width:199px;height:21.0px;background:#fff;border-bottom:1px dotted #8a8a8a"></div>
<div class="a" style="left:99px;top:146.5px;width:1px;height:21.0px;border-left:1px dotted #8a8a8a"></div>
<div class="t" style="left:10.3px;top:150.84px;font-size:12px;line-height:12px;letter-spacing:0.45px;color:#111">OmniClass N...</div>
<div class="a" style="left:0;top:167.5px;width:199px;height:21.0px;background:#fff;border-bottom:1px dotted #8a8a8a"></div>
<div class="a" style="left:99px;top:167.5px;width:1px;height:21.0px;border-left:1px dotted #8a8a8a"></div>
<div class="t" style="left:10.3px;top:171.84px;font-size:12px;line-height:12px;letter-spacing:0.45px;color:#111">OmniClass Ti...</div>
<div class="a" style="left:99.5px;top:63px;width:98.5px;height:21px;border:1.5px solid #111;background:#fff"></div>
<div class="t" style="left:102.3px;top:67.34px;font-size:12px;line-height:12px;letter-spacing:0.6px;color:#111">Use Diameter</div>
<div class="t" style="left:102.3px;top:109.34px;font-size:12px;line-height:12px;letter-spacing:0.45px;color:#111">Normal</div>
</div>
<div class="a" style="left:206px;top:296px;width:16px;height:175px;background:#f0f0f0"></div>
<div class="a" style="left:210px;top:314px;width:11px;height:61px;border:1px solid #a4a4a4;border-radius:2px;background:linear-gradient(90deg,#ececec,#cdcdcd)"></div>
<svg class="o" width="240" height="600"><path d="M210.5 307 L214.5 303 L218.5 307 Z" fill="#333"/><path d="M210.5 461 L214.5 465 L218.5 461 Z" fill="#333"/>
<path d="M211.5 342.5 L218.5 342.5 M211.5 345 L218.5 345 M211.5 347.5 L218.5 347.5" stroke="#555" stroke-width="1"/></svg>
<div class="t" style="left:8.1px;top:477.64px;font-size:12px;line-height:12px;letter-spacing:0.43px;color:#1f5fd0;text-decoration:underline">Properties help</div>
<div class="a" style="left:147.5px;top:474.5px;width:72px;height:20px;border:1px solid #acacac;border-radius:2px;background:linear-gradient(#f8f8f8,#ececec)"></div>
<div class="t" style="left:167.2px;top:478.34px;font-size:12px;line-height:12px;letter-spacing:0.35px;color:#8a8a8a;">Apply</div>
<div class="a" style="left:5px;top:498px;width:219px;height:5px;background:#f0f0f0"></div>
<div class="a" style="left:5px;top:503px;width:219px;height:18px;background:#c1cedc"></div>
<div class="t" style="left:8.2px;top:507.19px;font-size:11px;line-height:11px;letter-spacing:0.1px;color:#404040;">Project Browser - 10K ALUMINUM B...</div>
<svg class="o" width="240" height="849"><path d="M210.5 509.5 L217.5 516 M217.5 509.5 L210.5 516" stroke="#000" stroke-width="1.4"/></svg>
<div class="a" style="left:5px;top:521px;width:219px;height:300px;background:#f0f0f0"></div>
<div class="a" style="left:5px;top:524px;width:218px;height:296px;border-top:2px solid #6a6a6a;border-left:2px solid #6a6a6a;background:#fff"></div>
<div class="a" style="left:45px;top:525.5px;width:90px;height:19.5px;background:#e2e2e2"></div>
<div class="t" style="left:47.8px;top:528.94px;font-size:12px;line-height:12px;letter-spacing:0.4px;color:#111;">Views (</div>
<div class="t" style="left:47.8px;top:549.24px;font-size:12px;line-height:12px;letter-spacing:0.4px;color:#111;">Sheets (</div>
<div class="t" style="left:47.8px;top:569.04px;font-size:12px;line-height:12px;letter-spacing:0.4px;color:#111;">Families</div>
<div class="t" style="left:47.8px;top:589.14px;font-size:12px;line-height:12px;letter-spacing:0.4px;color:#111;">Groups</div>
<div class="t" style="left:47.8px;top:609.04px;font-size:12px;line-height:12px;letter-spacing:0.4px;color:#111;">Revit Links</div>
<div class="t" style="left:129.5px;top:528.94px;font-size:12px;line-height:12px;letter-spacing:0px;color:#111;">)</div>
<div class="t" style="left:134.5px;top:549.24px;font-size:12px;line-height:12px;letter-spacing:0px;color:#111;">)</div>
<svg class="o" width="1519" height="849"><g transform="translate(92 529.8)" fill="none" stroke="#111" stroke-width="1.15" stroke-linecap="round" stroke-linejoin="round">
<path d="M0.3 2.6 L9.6 2.3 M5.6 0.2 L5.6 5.2 Q5.6 7.4 4.1 7.2 Q2.6 6.9 2.8 5.4 Q3.1 4 4.7 4.4 Q6 5 5.8 7.3 Q5.4 9.4 3.2 10.3"/>
<path d="M11.6 6.3 L14.8 2.6 L21.5 9.6 M19.6 1.2 L20.5 3 M21.4 0.6 L22.3 2.4"/>
<path d="M24 2.6 Q29 2.1 33.3 1.6 Q28.6 4 28.6 6.9 Q28.6 10 32.6 10.1"/>
</g></svg>
<svg class="o" width="1519" height="849"><g transform="translate(97.6 550.1)" fill="none" stroke="#111" stroke-width="1.15" stroke-linecap="round" stroke-linejoin="round">
<path d="M0.3 2.6 L9.6 2.3 M5.6 0.2 L5.6 5.2 Q5.6 7.4 4.1 7.2 Q2.6 6.9 2.8 5.4 Q3.1 4 4.7 4.4 Q6 5 5.8 7.3 Q5.4 9.4 3.2 10.3"/>
<path d="M11.6 6.3 L14.8 2.6 L21.5 9.6 M19.6 1.2 L20.5 3 M21.4 0.6 L22.3 2.4"/>
<path d="M24 2.6 Q29 2.1 33.3 1.6 Q28.6 4 28.6 6.9 Q28.6 10 32.6 10.1"/>
</g></svg>
<svg class="o" width="240" height="849">
<g stroke="#8a8a8a" stroke-width="1" stroke-dasharray="1,1" fill="none">
<path d="M14.5 540 L14.5 617.5 L26 617.5 M19 535.5 L26 535.5 M15 555.5 L26 555.5 M19 575.5 L26 575.5 M19 595.5 L26 595.5"/>
</g>
<g fill="#f6f6f6" stroke="#a6a6a6" stroke-width="1"><rect x="10.5" y="531.5" width="8" height="8"/><rect x="10.5" y="571.5" width="8" height="8"/><rect x="10.5" y="591.5" width="8" height="8"/></g>
<g stroke="#2b3a8a" stroke-width="1"><path d="M12.5 535.5 L16.5 535.5 M14.5 533.5 L14.5 537.5 M12.5 575.5 L16.5 575.5 M14.5 573.5 L14.5 577.5 M12.5 595.5 L16.5 595.5 M14.5 593.5 L14.5 597.5"/></g>
<!-- views icon -->
<path d="M27 531.5 L27 528.5 L30 528.5 M38 528.5 L41 528.5 L41 531.5 M41 538.5 L41 541.5 L38 541.5 M30 541.5 L27 541.5 L27 538.5" fill="none" stroke="#333" stroke-width="1.2"/>
<path d="M31 533 L33 531 L37.5 531 L37.5 537 L35.5 539 L31 539 Z" fill="#eee" stroke="#333" stroke-width="1"/>
<!-- sheets icon -->
<path d="M26.5 548.5 L38 548.5 L41.5 552 L41.5 561.5 L26.5 561.5 Z" fill="#f4f4f4" stroke="#333" stroke-width="1.1"/>
<path d="M29 559 L29 552 L35 552 M32 559 L32 555 L35 555" fill="none" stroke="#666" stroke-width="1"/>
<!-- families -->
<path d="M27.5 568.5 L33.5 568.5 L33.5 575 L27.5 575 Z M35.5 568.5 L40.5 568.5 L40.5 580.5 L27.5 580.5 L27.5 577" fill="#f0f0f0" stroke="#333" stroke-width="1.1"/>
<!-- groups -->
<path d="M29.5 588.5 L27 588.5 L27 601.5 L29.5 601.5 M38.5 588.5 L41 588.5 L41 601.5 L38.5 601.5" fill="none" stroke="#333" stroke-width="1.1"/>
<circle cx="33" cy="593" r="3.5" fill="#ddd" stroke="#555"/>
<rect x="32.5" y="594.5" width="5" height="5" fill="#ccc" stroke="#555"/>
<!-- revit links -->
<g fill="none" stroke="#d39b00" stroke-width="1.8"><rect x="26.5" y="614" width="7" height="6" rx="3"/><rect x="33.5" y="614" width="7" height="6" rx="3"/></g>
<path d="M30 617 L37 617" stroke="#6a5000" stroke-width="1"/>
</svg>
<div class="a" style="left:224px;top:174px;width:4px;height:647px;background:#f0f0f0"></div>
<div class="a" style="left:5px;top:819px;width:219px;height:2px;background:#f0f0f0"></div>
<div class="a" style="left:228px;top:174px;width:287px;height:0px;"></div>
<div class="a" style="left:228px;top:174px;width:1287px;height:647px;background:#f0f0f0"></div>
<div class="a" style="left:228px;top:174px;width:1287px;height:629px;border-top:2px solid #6a6a6a;border-left:2px solid #6a6a6a;background:#fff"></div>
<div class="a" style="left:1497px;top:176px;width:16px;height:627px;background:#efefef;border-left:1px solid #e4e4e4"></div>
<div class="a" style="left:1497px;top:481px;width:16px;height:16px;border:1px solid #a8a8a8;border-radius:2px;background:linear-gradient(90deg,#f6f6f6,#dcdcdc)"></div>
<div class="a" style="left:230px;top:802px;width:245px;height:17px;background:#f0f0f0"></div>
<div class="a" style="left:228px;top:802px;width:2px;height:18px;background:#6a6a6a"></div>
<div class="a" style="left:475px;top:803px;width:1022px;height:16px;background:#e9e9e9"></div>
<div class="a" style="left:475px;top:803px;width:17px;height:16px;background:#ececec"></div>
<div class="a" style="left:978px;top:803px;width:15px;height:15px;border:1px solid #a8a8a8;border-radius:2px;background:linear-gradient(#f6f6f6,#dcdcdc)"></div>
<div class="a" style="left:1497px;top:803px;width:16px;height:16px;background:#efefef"></div>
<div class="t" style="left:257.9px;top:805.84px;font-size:12px;line-height:12px;letter-spacing:-0.6px;color:#111;">1 : 20</div>
<svg class="o" width="1519" height="849">
<path d="M1502 190 L1505 186.5 L1508 190 Z" fill="#333"/>
<path d="M1501.5 790 L1508.5 790 L1505 794 Z" fill="#333"/>
<path d="M481 810 L485 806.5 L485 813.5 Z" fill="#333"/>
<path d="M1486 806.5 L1490 810 L1486 813.5 Z" fill="#333"/>
<g fill="#bbb"><rect x="1506" y="815" width="1" height="1"/><rect x="1508" y="815" width="1" height="1"/><rect x="1510" y="815" width="1" height="1"/><rect x="1508" y="813" width="1" height="1"/><rect x="1510" y="813" width="1" height="1"/><rect x="1510" y="811" width="1" height="1"/></g>
<!-- window controls -->
<rect x="1445.5" y="191" width="11" height="3" fill="#f2f2f2" stroke="#555" stroke-width="1"/>
<rect x="1462.5" y="186.5" width="8" height="8" fill="#f2f2f2" stroke="#555" stroke-width="1.1"/>
<path d="M1465 184.5 L1473 184.5 L1473 192" fill="none" stroke="#555" stroke-width="1.1"/>
<rect x="1465" y="189" width="3" height="3" fill="none" stroke="#555" stroke-width="0.8"/>
<path d="M1482.5 185 L1492 194 M1492 185 L1482.5 194" stroke="#555" stroke-width="3"/>
<path d="M1482.5 185 L1492 194 M1492 185 L1482.5 194" stroke="#f0f0f0" stroke-width="1.2"/>
<!-- viewcube -->
<defs><radialGradient id="shd" cx="0.5" cy="0.5" r="0.5"><stop offset="0" stop-color="#000" stop-opacity="0.16"/><stop offset="1" stop-color="#000" stop-opacity="0"/></radialGradient>
<linearGradient id="cubeL" x1="0" y1="0" x2="0" y2="1"><stop offset="0" stop-color="#f2f2f2"/><stop offset="1" stop-color="#e2e2e2"/></linearGradient></defs>
<ellipse cx="1444" cy="283" rx="40" ry="17" fill="url(#shd)"/>
<path d="M1443.5 225 L1474.8 238.3 L1442.4 255.8 L1411 238.3 Z" fill="#f0f0f0" stroke="#8a8a8a" stroke-width="0.9"/>
<path d="M1411 238.3 L1442.4 255.8 L1442.4 292.4 L1414.8 272.8 Z" fill="url(#cubeL)" stroke="#8a8a8a" stroke-width="0.9"/>
<path d="M1474.8 238.3 L1442.4 255.8 L1442.4 292.4 L1470.5 273.9 Z" fill="url(#cubeL)" stroke="#8a8a8a" stroke-width="0.9"/>
<text x="0" y="0" font-size="8" fill="#8e8e8e" font-family="Liberation Sans" transform="translate(1416.5 258.5) skewY(30) scale(0.85 1)">FRONT</text>
<text x="0" y="0" font-size="8" fill="#8e8e8e" font-family="Liberation Sans" transform="translate(1447.5 279) skewY(-32) scale(0.85 1)">RIGHT</text>
<text x="0" y="0" font-size="7" fill="#8e8e8e" font-family="Liberation Sans" transform="translate(1450.5 235.5) rotate(200) scale(0.85 1)">TOP</text>
<!-- nav bar -->
<rect x="1461" y="311" width="34" height="116" rx="5" fill="#f4f4f4" stroke="#b0b0b0" stroke-width="1.8"/>
<circle cx="1488" cy="317" r="3.3" fill="#e2e2e2" stroke="#a8a8a8"/>
<path d="M1486.3 315.3 L1489.7 318.7 M1489.7 315.3 L1486.3 318.7" stroke="#fff" stroke-width="1"/>
<circle cx="1488" cy="420" r="3.3" fill="#e2e2e2" stroke="#a8a8a8"/>
<path d="M1486 419 L1490 419 M1486 421 L1490 421" stroke="#fff" stroke-width="0.8"/>
<path d="M1478 331.5 Q1485 331.5 1485 338 L1485 346 L1480 350 Q1466 350 1466 341 Q1466 331.5 1478 331.5 Z" fill="#ececec" stroke="#8e8e8e" stroke-width="1"/>
<circle cx="1475.5" cy="340.5" r="4.5" fill="none" stroke="#8e8e8e" stroke-width="1"/>
<path d="M1481 346 L1484 343 L1490 343 L1490 350 L1487 353.5 L1481 353.5 Z" fill="#a9cdf0" stroke="#4a86c8" stroke-width="1"/>
<path d="M1475 363 L1480 363 L1477.5 366 Z" fill="#666"/>
<path d="M1465 368.5 L1491 368.5" stroke="#c8c8c8" stroke-width="1"/>
<rect x="1470.5" y="377.5" width="10" height="10" fill="#bcd9a8" stroke="#5a9a40" stroke-width="1"/>
<circle cx="1479.5" cy="387.5" r="3.3" fill="#f0f0f0" stroke="#555" stroke-width="1"/>
<path d="M1482 390 L1485 393" stroke="#555" stroke-width="1.5"/>
<path d="M1475 404 L1480 404 L1477.5 407 Z" fill="#666"/>
<!-- view control icons -->
<rect x="309.5" y="803.5" width="15" height="12" fill="#f8f8f8" stroke="#333" stroke-width="1.2"/>
<path d="M312 806 L315 806 L315 809 L312 809 Z M318 806 L321 806 L321 809 L318 809 Z M315 809 L318 809 L318 812 L315 812 Z" fill="#777"/>
<path d="M331.5 808 L335 804.5 L346 804.5 L346 812 L342.5 815.5 L331.5 815.5 Z" fill="#b8dcf0" stroke="#1f6cc9" stroke-width="1.2"/>
<path d="M331.5 808 L342.5 808 L346 804.5 M342.5 808 L342.5 815.5" fill="none" stroke="#1f6cc9" stroke-width="1"/>
<path d="M353 807 L353 815 M353 807 L365 807 M356 810 L356 815 M350 811 L353 811" fill="none" stroke="#1f5fae" stroke-width="1.4"/>
<path d="M359 810 L365 816 M365 810 L359 816" stroke="#d02020" stroke-width="1.8"/>
<path d="M374 807 L374 815 M374 807 L383 807 M377 810 L377 815 M371 811 L374 811" fill="none" stroke="#1f5fae" stroke-width="1.4"/>
<circle cx="384" cy="809" r="3" fill="#bfe0f8" stroke="#3c8ee8"/>
<path d="M383 812 L383 816 L385 816 L385 812" fill="none" stroke="#555"/>
<path d="M393 810 L399 804.5 L405 810 L405 816 L393 816 Z" fill="#f0f0f0" stroke="#333" stroke-width="1.1"/>
<rect x="400" y="811" width="6" height="5" fill="#3c8a70"/>
<path d="M414 810 Q417 806 420 811 Q422 814 424 809 L429 807" fill="none" stroke="#333" stroke-width="1.2"/>
<circle cx="423.5" cy="811" r="3" fill="#d8e8f4" stroke="#333"/>
<path d="M434.5 804 L434.5 816 M449.5 804 L449.5 812 M434.5 806 L449.5 806" stroke="#333" stroke-width="1.2"/>
<rect x="443" y="810.5" width="7" height="5" rx="1" fill="#555"/>
<rect x="455.5" y="804.5" width="11" height="6" rx="1" fill="#e6eaf0" stroke="#333" stroke-width="1.1"/>
<rect x="455.5" y="812.5" width="11" height="3" rx="1" fill="none" stroke="#333" stroke-width="1.1"/>
<circle cx="467.5" cy="809" r="3.2" fill="#bfe0f8" stroke="#3c8ee8" stroke-width="1.2"/>
</svg>
<svg class="o" width="1519" height="849">
<defs>
<linearGradient id="stem" x1="0" y1="0" x2="1" y2="0"><stop offset="0" stop-color="#c8c6c2"/><stop offset="0.35" stop-color="#e6e4e0"/><stop offset="0.7" stop-color="#cfcdca"/><stop offset="1" stop-color="#555"/></linearGradient>
<linearGradient id="endf" x1="0" y1="0" x2="0" y2="1"><stop offset="0" stop-color="#fff"/><stop offset="0.25" stop-color="#f2f2f2"/><stop offset="0.42" stop-color="#b8b8b8"/><stop offset="1" stop-color="#b0b0b0"/></linearGradient>
</defs>
<!-- lower valve body -->
<path d="M806 516 L794 532 L790 556 L795 580 L808 603 L830 628 L850 641 L868 645 L886 640 L900 630 L920 626 L932 604 L936 580 L932 556 L922 520 L910 500 Z" fill="#000"/>
<ellipse cx="860" cy="582" rx="48" ry="60" transform="rotate(-28 860 582)" fill="none" stroke="#141414" stroke-width="3"/>
<!-- body cylinder -->
<rect x="804" y="474" width="88" height="70" fill="#000"/>
<path d="M828 510 Q860 518 892 508" fill="none" stroke="#ddd" stroke-width="1" stroke-dasharray="5,3"/><path d="M826 504 Q860 512 892 503" fill="none" stroke="#bbb" stroke-width="0.8" stroke-dasharray="4,4"/>
<!-- collar -->
<ellipse cx="863" cy="474" rx="60.5" ry="36" fill="#000"/>
<ellipse cx="863" cy="471" rx="48.5" ry="24.5" fill="#dcdbd8"/>
<!-- stem -->
<path d="M832.5 420 L893.5 420 L893.5 470 Q893.5 486 863 486 Q832.5 486 832.5 470 Z" fill="#000"/>
<path d="M841 428 L879 430 L885 433 L885 468 Q885 483.5 863 483.5 Q841 483.5 841 468 Z" fill="url(#stem)"/>
<!-- lower lever -->
<path d="M912 436 L956 452 L1066 504 L1079.4 510.9 L1091 523.8 L1091 533 L1080.7 543.3 L1065 552.3 L1058 551 L970.7 472.7 L954 458.7 L946 454.6 L929.5 453 L908 445.5 Z" fill="#000"/>
<path d="M966 458 L1058.7 540.7" stroke="#fff" stroke-width="1.2"/>
<path d="M975 462 L1068 509.5 L1080 521.5 L1068 528.5 L990 478 Z" fill="#fff"/>
<!-- handle silhouette -->
<path d="M798.4 386.4 L799.5 379 L802.6 373.7 L807 367.5 L812.5 362.4 L820 357.5 L829.5 353.2 L860 335.3 L870.7 335.3 L887.2 340 L901.3 333.5 L913 334 L924.9 340.6 L927.8 353.6 L947 358 L1099.6 450.3 L1108 456 L1111.5 463 L1111.5 484 L1072 506.5 L1057 503.3 L960 455 L930 452.4 L918.5 452.4 L907.8 444.1 L885.3 435.8 L833 426.6 L821 420.4 L814 415.5 L808.3 410.5 L803 404.5 L799.8 399.2 L798.5 393 Z" fill="#000" stroke="#000" stroke-width="1" stroke-linejoin="round"/>
<!-- hub top face -->
<path d="M835.3 360.6 L867.2 341.8 L932 363.6 L899.6 381.8 Z" fill="#fff"/>
<path d="M898 346 L903 343 L910 345 L905 348 Z" fill="#dcdbd8"/>
<!-- lever top face -->
<path d="M909 386 L942.7 366.5 L1095.4 455.6 L1103.9 460 L1071 479 L1057.2 469.3 Z" fill="#fff"/>
<!-- end face -->
<path d="M1071 484.2 L1103.9 460.9 L1104 480 L1071 498 Z" fill="url(#endf)"/>
<!-- front face strip -->
<path d="M824.7 371.2 L899 394.8 L930 414.2 L1057 484.2 L1058.3 499 L930 433.3 L920 430 L863.6 403 L860 395 L856.5 407.7 L828 392 L821.8 386 L821.8 372 Z" fill="#fff"/>
<!-- gray crescent -->
<path d="M810.4 375.1 L813.6 375.1 L814.2 388 L818 391.5 L826 392.4 L856.5 407.7 L869.5 413 L850.7 412.5 L834 408 L822 401 L814 393 L811 385 Z" fill="#dcdbd8"/>
<path d="M922 439 L927 441.4 L926 442.5 L921 440 Z" fill="#fff"/>
<!-- red connector lines -->
<g stroke="#ff0000" stroke-width="9" stroke-linecap="round" fill="none">
<path d="M810.4 481 L810.4 545"/>
<path d="M798 474 L871 518"/>
<path d="M828 475.5 L798.5 496.7"/>
<path d="M793 532 L890 576"/>
<path d="M828 530.7 L793 550.5"/>
<path d="M854 613 L933 655.4"/>
<path d="M915.4 650 L931.9 674.8"/>
<path d="M912 585 L912 650"/>
<path d="M933 596 L933 621"/>
</g>
<!-- right text rect -->
<rect x="891" y="489" width="40" height="139" fill="#fff"/>
<rect x="931" y="555" width="5" height="40" fill="#000"/>
<path d="M933 597 L933 621" stroke="#ff0000" stroke-width="5"/>
<text transform="translate(923.5 628) rotate(-90)" font-size="34.5" fill="#0000ff" stroke="#0000ff" stroke-width="0.5" font-family="Liberation Sans">Diameter</text>
<text transform="translate(788.7 504.8) rotate(-90)" font-size="34.5" fill="#0000ff" stroke="#0000ff" stroke-width="0.5" font-family="Liberation Sans">Diameter</text>
<path d="M868 531 Q884 532 894 548 Q903 563 900 580 L892 576 Q886 560 876 546 Z" fill="#fff"/>
<path d="M847 569 L853 566 L860 578 L856 581 Z" fill="#dcdcdc"/>
<!-- green -->
<ellipse cx="882.5" cy="555" rx="21.5" ry="32.5" transform="rotate(-28 882.5 555)" fill="none" stroke="#007a00" stroke-width="7.8"/>
<ellipse cx="842.5" cy="577.5" rx="21" ry="32" transform="rotate(-28 842.5 577.5)" fill="none" stroke="#007a00" stroke-width="7.8"/>
<!-- blue axis -->
<g stroke="#0000ff" stroke-width="8" stroke-linecap="round">
<path d="M708 656 L846 574"/>
<path d="M880 556 L1012 478"/>
</g>
<path d="M696 663 L698 659 L717 639.5 L721 640.5 L723 648 L729 652 L728.5 657 L700 665 Z" fill="#0000ff" stroke="#0000ff" stroke-width="2" stroke-linejoin="round"/>
<path d="M1030 468.5 L998 475 L996.5 480 L1003 486 L1008.5 494.5 L1013 492 Z" fill="#0000ff" stroke="#0000ff" stroke-width="2" stroke-linejoin="round"/>
</svg>
<div class="a" style="left:5px;top:820px;width:1510px;height:1px;background:#fafafa"></div>
<div class="a" style="left:0px;top:821px;width:1519px;height:1px;background:#8c8c8c"></div>
<div class="a" style="left:0px;top:822px;width:1519px;height:27px;background:#d4d4d4"></div>
<div class="t" style="left:6px;top:826.70px;font-size:13px;line-height:13px;letter-spacing:0.06px;color:#111;">Click to select, TAB for alternates, CTRL adds, SHIFT unselects.</div>
<svg class="o" width="1519" height="849">
<!-- links select -->
<g fill="none" stroke="#d39b00" stroke-width="1.6"><rect x="1285.5" y="826.5" width="7" height="5" rx="2.5"/><rect x="1291.5" y="826.5" width="7" height="5" rx="2.5"/></g>
<path d="M1294 830 L1294 840 L1296.5 837.5 L1298.5 841.5 L1300 840.8 L1298 837 L1301 837 Z" fill="#fff" stroke="#333" stroke-width="0.9"/>
<!-- underlay select -->
<path d="M1312 838 L1322 831 M1312 838 L1322 838 M1314 834.5 L1321 834.5" stroke="#1f6cc9" stroke-width="1.2" fill="none"/>
<path d="M1321 827 L1327 833 M1327 827 L1321 833" stroke="#d02020" stroke-width="1.8"/>
<path d="M1320 832 L1320 842 L1322.5 839.5 L1324.5 843.5 L1326 842.8 L1324 839 L1327 839 Z" fill="#fff" stroke="#333" stroke-width="0.9"/>
<!-- pinned -->
<rect x="1337" y="826.5" width="10" height="4" fill="#f2a040" stroke="#a05a10" stroke-width="0.9"/>
<path d="M1339 830.5 L1339 835 L1345 835 L1345 830.5 M1342 835 L1342 841" fill="#f2a040" stroke="#a05a10" stroke-width="0.9"/>
<path d="M1346 832 L1346 842 L1348.5 839.5 L1350.5 843.5 L1352 842.8 L1350 839 L1353 839 Z" fill="#fff" stroke="#333" stroke-width="0.9"/>
<!-- select by face -->
<path d="M1364 829 L1364 841 L1370 838 L1370 826 Z" fill="#b8dcf0" stroke="#1f6cc9" stroke-width="1"/>
<path d="M1373 826 L1379 832 M1379 826 L1373 832" stroke="#d02020" stroke-width="1.8"/>
<path d="M1372 832 L1372 842 L1374.5 839.5 L1376.5 843.5 L1378 842.8 L1376 839 L1379 839 Z" fill="#fff" stroke="#333" stroke-width="0.9"/>
<!-- drag -->
<path d="M1393 826 L1393 834 M1389 830 L1397 830" stroke="#111" stroke-width="1.3"/>
<path d="M1397 831 L1397 841 L1399.5 838.5 L1401.5 842.5 L1403 841.8 L1401 838 L1404 838 Z" fill="#fff" stroke="#333" stroke-width="0.9"/>
<!-- spinner -->
<circle cx="1422" cy="833.5" r="6" fill="none" stroke="#c4c4c4" stroke-width="2.2" stroke-dasharray="2,1"/>
<!-- filter -->
<path d="M1438.5 827.5 L1453.5 827.5 L1447.5 834.5 L1447.5 840.5 L1444.5 840.5 L1444.5 834.5 Z" fill="#e4e6ea" stroke="#333" stroke-width="1.1" stroke-linejoin="round"/>
<g fill="#bbb"><rect x="1510" y="845" width="1" height="1"/><rect x="1512" y="845" width="1" height="1"/><rect x="1514" y="845" width="1" height="1"/><rect x="1512" y="843" width="1" height="1"/><rect x="1514" y="843" width="1" height="1"/><rect x="1514" y="841" width="1" height="1"/></g>
</svg>
<div class="t" style="left:1455px;top:827.00px;font-size:13px;line-height:13px;letter-spacing:0px;color:#111;">:0</div>
</body></html>
